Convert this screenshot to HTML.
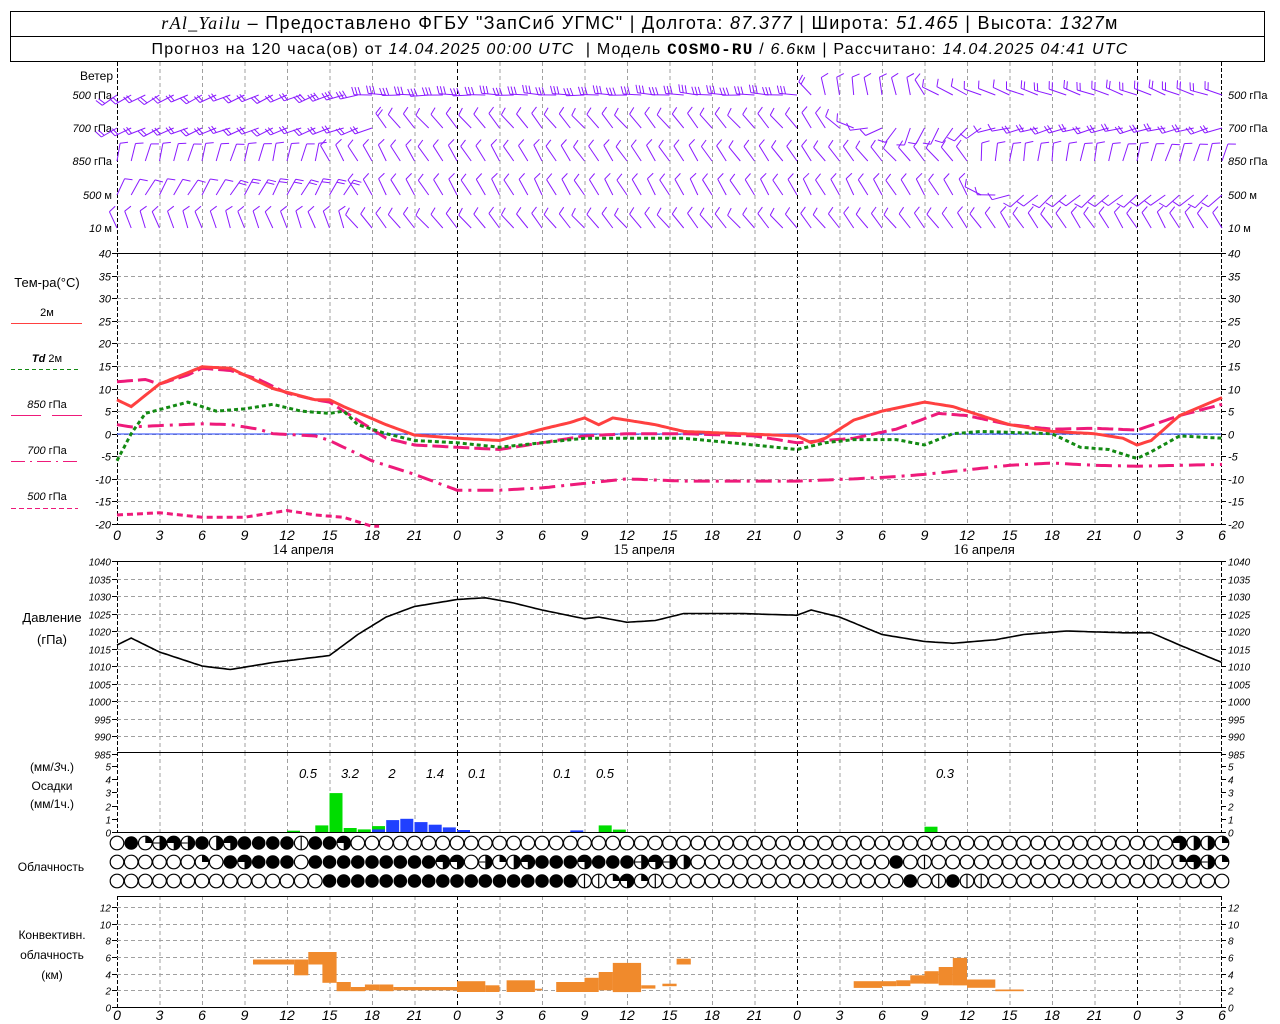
<!DOCTYPE html>
<html><head><meta charset="utf-8">
<style>
html,body{margin:0;padding:0;background:#fff;width:1280px;height:1024px;overflow:hidden}
svg{display:block}
.t{font-family:"Liberation Sans",sans-serif;fill:#000}
.i{font-family:"Liberation Sans",sans-serif;font-style:italic;fill:#000}
</style></head><body>
<svg id="s" width="1280" height="1024" xmlns="http://www.w3.org/2000/svg">
<rect x="10.5" y="11.5" width="1254" height="50" fill="none" stroke="#000"/>
<line x1="10" y1="36.5" x2="1265" y2="36.5" stroke="#000"/>
<text class="t" x="640" y="29" style="font-size:18px;letter-spacing:1.3px" text-anchor="middle" xml:space="preserve"><tspan font-family="Liberation Serif" font-style="italic">rAl_Yailu</tspan> – Предоставлено ФГБУ "ЗапСиб УГМС" | Долгота: <tspan font-style="italic">87.377</tspan> | Широта: <tspan font-style="italic">51.465</tspan> | Высота: <tspan font-style="italic">1327</tspan>м</text>
<text class="t" x="640" y="54" style="font-size:16px;letter-spacing:1.2px" text-anchor="middle" xml:space="preserve">Прогноз на 120 часа(ов) от <tspan font-style="italic">14.04.2025 00:00 UTC</tspan>  | Модель <tspan font-family="Liberation Mono" font-weight="bold">COSMO-RU</tspan> / <tspan font-style="italic">6.6</tspan>км | Рассчитано: <tspan font-style="italic">14.04.2025 04:41 UTC</tspan></text>
<g id="g"></g>
</svg>
<script>
var o=[];
function X(h){return 117+h*340/24}
function L(x1,y1,x2,y2,c,w,d){o.push('<line x1="'+x1+'" y1="'+y1+'" x2="'+x2+'" y2="'+y2+'" stroke="'+c+'" stroke-width="'+(w||1)+'"'+(d?' stroke-dasharray="'+d+'"':'')+'/>')}
function T(x,y,s,a,cl,fs){o.push('<text class="'+(cl||'i')+'" x="'+x+'" y="'+y+'"'+(a?' text-anchor="'+a+'"':'')+' style="font-size:'+(fs||11)+'px">'+s+'</text>')}
function interp(p,h){for(var i=0;i<p.length-1;i++){if(h>=p[i][0]&&h<=p[i+1][0]){var f=(h-p[i][0])/(p[i+1][0]-p[i][0]);return p[i][1]+f*(p[i+1][1]-p[i][1]);}}return p[p.length-1][1]}
function curve(p,Y,c,w,d,h0,h1){var s='';for(var h=(h0||0);h<=(h1||78)+0.001;h+=0.25){s+=X(h).toFixed(1)+','+Y(interp(p,h)).toFixed(1)+' '}o.push('<polyline points="'+s+'" fill="none" stroke="'+c+'" stroke-width="'+w+'"'+(d?' stroke-dasharray="'+d+'"':'')+'/>')}
function vgrid(y1,y2){for(var h=0;h<=78;h+=3){var day=(h%24==0);if(h==0||h==78)continue;L(X(h)+.5,y1,X(h)+.5,y2,day?'#000':'#a0a0a0',1,'4,3')}L(117.5,y1,117.5,y2,'#000',1,'4,2');L(1221.5,y1,1221.5,y2,'#000',1,'4,2')}
vgrid(62,253);vgrid(253,524);vgrid(561,752);vgrid(752,832);vgrid(896,1007);
var TY=function(t){return 433.7-t*4.517};
for(var t=-20;t<=40;t+=5){var y=Math.round(TY(t))+.5;if(t>-20&&t<40)L(117,y,1221,y,'#a0a0a0',1,'4,3');L(112,y,117,y,'#000');L(1221,y,1226,y,'#000');T(111,y+4,t,'end');T(1228,y+4,t)}
L(117,253.5,1221,253.5,'#000');L(117,524.5,1221,524.5,'#000');
L(117,434,1221,434,'#2040ff',1);
var hrs=[0,3,6,9,12,15,18,21];
for(var h=0;h<=78;h+=3){T(X(h),540,hrs[(h%24)/3],'middle',null,14);T(X(h),1020,hrs[(h%24)/3],'middle',null,14)}
T(303,554,'<tspan font-family="Liberation Serif" style="font-size:15px">14</tspan> апреля','middle','t',13);
T(644,554,'<tspan font-family="Liberation Serif" style="font-size:15px">15</tspan> апреля','middle','t',13);
T(984,554,'<tspan font-family="Liberation Serif" style="font-size:15px">16</tspan> апреля','middle','t',13);
var p500=[[0,-18],[3,-17.5],[6,-18.5],[9,-18.5],[12,-17],[14,-18],[16,-18.5],[17,-19.5],[18,-20.5]];
var p700=[[0,2],[1,1.5],[3,1.8],[6,2.2],[8,2],[10,1],[11,0],[14,-0.5],[15,-1.5],[18,-6],[21,-9],[24,-12.5],[27,-12.5],[30,-12],[33,-11],[36,-10],[40,-10.5],[48,-10.5],[52,-10],[55,-9.5],[57,-9],[60,-8],[63,-7],[66,-6.5],[69,-7],[72,-7.2],[75,-7],[78,-6.8]];
var p850=[[0,11.5],[2,12],[3,11],[5,13],[6,14.5],[8,14],[10,12],[12,9],[14,7.5],[15,7],[17,3],[19,-1],[21,-2.5],[24,-3],[27,-3.5],[30,-2],[33,-0.5],[36,0],[40,0],[45,-0.5],[48,-2],[52,-1],[55,1],[58,4.5],[60,4],[63,2],[66,1],[69,1.2],[72,0.8],[75,4],[78,6.5]];
var pTd=[[0,-6],[1,0],[2,4.5],[5,7],[7,5],[9,5.5],[11,6.5],[13,5],[15,4.5],[16,5],[17,2],[19,0],[21,-1.5],[24,-2],[27,-3],[30,-2],[33,-1],[36,-1],[40,-1],[45,-2.5],[48,-3.5],[50,-2],[52,-1.3],[55,-1.3],[57,-2.5],[59,0],[61,0.5],[66,0],[68,-3],[70,-3.5],[72,-5.5],[73,-4],[75,-0.5],[78,-1]];
var pT=[[0,7.5],[1,6],[3,11],[6,14.8],[8,14.5],[11,10],[14,7.5],[15,7.5],[16,6],[19,2],[21,-0.3],[24,-1],[27,-1.5],[30,1],[32,2.5],[33,3.5],[34,2],[35,3.5],[38,2],[40,0.5],[48,-0.5],[49,-2],[50,-1],[52,3],[54,5],[57,7],[59,6],[61,4],[63,2],[66,0.5],[69,0],[71,-1],[72,-2.5],[73,-1.5],[75,4],[78,8]];
curve(p500,TY,'#ee1a7a',3,'6,4',0,18.5);
curve(p700,TY,'#ee1a7a',3,'16,6,3,6');
curve(p850,TY,'#ee1a7a',3,'16,5');
curve(pTd,TY,'#138a13',3,'4,3');
curve(pT,TY,'#ff4040',3);
T(47,287,'Тем-ра(°C)','middle','t',13);
T(47,316,'2м','middle','t',11);L(11,323.5,82,323.5,'#ff4040',1);
T(47,362,'<tspan font-style="italic" font-weight="bold">Td</tspan>  2м','middle','t',11);L(11,369.5,78,369.5,'#138a13',1,'4,3');
T(47,408,'<tspan font-style="italic">850</tspan> гПа','middle','t',11);L(11,415.5,41,415.5,'#ee1a7a',1);L(52,415.5,82,415.5,'#ee1a7a',1);
T(47,454,'<tspan font-style="italic">700</tspan> гПа','middle','t',11);L(11,461.5,78,461.5,'#ee1a7a',1,'14,5,2,5');
T(47,500,'<tspan font-style="italic">500</tspan> гПа','middle','t',11);L(11,508.5,78,508.5,'#ee1a7a',1,'5,3');
var PY=function(p){return 561+(1040-p)*3.5};
for(var p=985;p<=1040;p+=5){var y=Math.round(PY(p))+.5;if(p>985&&p<1040)L(117,y,1221,y,'#a0a0a0',1,'4,3');L(112,y,117,y,'#000');L(1221,y,1226,y,'#000');T(111,y+4,p,'end',null,10);T(1228,y+4,p,null,null,10)}
L(117,561.5,1221,561.5,'#000');L(117,752.5,1221,752.5,'#000');
var pp=[[0,1016],[1,1018],[3,1014],[6,1010],[8,1009],[11,1011],[13,1012],[15,1013],[17,1019],[19,1024],[21,1027],[24,1029],[26,1029.5],[28,1028],[30,1026],[33,1023.5],[34,1024],[36,1022.5],[38,1023],[40,1025],[44,1025],[48,1024.5],[49,1026],[51,1024],[54,1019],[57,1017],[59,1016.5],[62,1017.5],[64,1019],[67,1020],[71,1019.5],[73,1019.5],[75,1016],[78,1011]];
curve(pp,PY,'#000',1.6);
T(52,622,'Давление','middle','t',13);T(52,644,'(гПа)','middle','t',13);
var RY=function(v){return 832-v*13.2};
for(var v=0;v<=5;v++){var y=Math.round(RY(v))+.5;L(112,y,117,y,'#000');L(1221,y,1226,y,'#000');T(111,y+4,v,'end',null,10);T(1228,y+4,v,null,null,10)}
var bars=[[12,.1,'#00dd00'],[14,.5,'#00dd00'],[15,2.95,'#00dd00'],[16,.3,'#00dd00'],[17,.2,'#00dd00'],[18,.45,'#00dd00'],[18,.2,'#2040ff'],[19,.9,'#2040ff'],[20,1,'#2040ff'],[21,.75,'#2040ff'],[22,.55,'#2040ff'],[23,.35,'#2040ff'],[24,.15,'#2040ff'],[32,.12,'#2040ff'],[34,.5,'#00dd00'],[35,.18,'#00dd00'],[57,.4,'#00dd00']];
bars.forEach(function(b){o.push('<rect x="'+X(b[0]).toFixed(1)+'" y="'+RY(b[1]).toFixed(1)+'" width="13" height="'+(b[1]*13.2).toFixed(1)+'" fill="'+b[2]+'"/>')});
L(117,832.5,1221,832.5,'#000');
[[308,'0.5'],[350,'3.2'],[392,'2'],[435,'1.4'],[477,'0.1'],[562,'0.1'],[605,'0.5'],[945,'0.3']].forEach(function(a){T(a[0],778,a[1],'middle',null,13)});
T(52,771,'(мм/<tspan font-style="italic">3</tspan>ч.)','middle','t',12);T(52,790,'Осадки','middle','t',12);T(52,808,'(мм/1ч.)','middle','t',12);
var r1={},r2={},r3={};
function fill(r,a,b,v){for(var i=a;i<=b;i++)r[i]=v}
Object.assign(r1,{1:4,2:1,3:6,4:3,5:6,6:4,7:2,8:3,9:4,10:4,11:4,12:4,13:5,14:4,15:4,16:3,75:3,76:2,77:2,78:1});
fill(r2,14,22,4);Object.assign(r2,{6:1,8:4,9:3,10:4,11:4,12:4,13:0,23:3,24:3,25:0,26:6,27:1,28:2,29:3,30:4,31:4,32:4,33:3,34:4,35:4,36:4,37:6,38:3,39:6,40:2,55:4,57:5,73:5,75:1,76:3,77:6,78:1});
fill(r3,15,32,4);Object.assign(r3,{33:5,34:5,35:1,36:3,37:1,38:5,56:4,58:5,59:4,60:5,61:5});
function circ(cx,cy,v){var r=6.8,s='';
 if(v==4)s+='<circle cx="'+cx+'" cy="'+cy+'" r="'+r+'" fill="#000"/>';
 else{s+='<circle cx="'+cx+'" cy="'+cy+'" r="'+r+'" fill="#fff" stroke="#000" stroke-width="1.2"/>';
 if(v==1)s+='<path d="M'+cx+' '+cy+'V'+(cy-r)+'A'+r+' '+r+' 0 0 1 '+(cx+r)+' '+cy+'Z" fill="#000"/>';
 if(v==2)s+='<path d="M'+cx+' '+(cy-r)+'A'+r+' '+r+' 0 0 1 '+cx+' '+(cy+r)+'Z" fill="#000"/>';
 if(v==3)s+='<path d="M'+cx+' '+cy+'H'+(cx-r)+'A'+r+' '+r+' 0 1 1 '+cx+' '+(cy+r)+'Z" fill="#000"/>';
 if(v==5)s+='<line x1="'+cx+'" y1="'+(cy-r)+'" x2="'+cx+'" y2="'+(cy+r)+'" stroke="#000" stroke-width="1.2"/>';
 if(v==6)s+='<path d="M'+cx+' '+(cy-r)+'A'+r+' '+r+' 0 0 1 '+cx+' '+(cy+r)+'Z" fill="#000"/><line x1="'+(cx-r)+'" y1="'+cy+'" x2="'+cx+'" y2="'+cy+'" stroke="#000"/>';}
 o.push(s)}
for(var h=0;h<=78;h++){var cx=Math.round(X(h)*10)/10;circ(cx,843,r1[h]||0);circ(cx,862,r2[h]||0);circ(cx,881,r3[h]||0)}
T(51,871,'Облачность','middle','t',12);
var CY=function(k){return 1007-k*8.33};
for(var k=0;k<=12;k+=2){var y=Math.round(CY(k))+.5;if(k>0)L(117,y,1221,y,'#a0a0a0',1,'4,3');L(112,y,117,y,'#000');L(1221,y,1226,y,'#000');T(111,y+4,k,'end',null,10);T(1228,y+4,k,null,null,10)}
L(117,896.5,1221,896.5,'#000');L(117,1007.5,1221,1007.5,'#000');
var cb=[[9.6,12.5,5.1,5.7],[12.5,13.5,3.8,5.7],[13.5,14.5,5.1,6.6],[14.5,15.5,2.9,6.6],[15.5,16.5,1.9,3],[16.5,17.5,1.9,2.4],[17.5,18.5,2,2.7],[18.5,19.5,1.9,2.7],[19.5,24,2,2.4],[24,26,1.8,3.1],[26,27,1.8,2.6],[27.5,29.5,1.8,3.2],[29.5,30,2,2.2],[31,33,1.8,3],[33,34,1.8,3.5],[34,35,2,4.2],[35,37,1.8,5.3],[37,38,2.2,2.6],[38.5,39.5,2.5,2.8],[39.5,40.5,5.1,5.8],[52,54,2.3,3.1],[54,55,2.5,3.1],[55,56,2.5,3.2],[56,57,2.8,3.8],[57,58,2.8,4.3],[58,59,2.6,4.8],[59,60,2.6,5.9],[60,62,2.3,3.3],[62,64,1.9,2.1]];
cb.forEach(function(b){o.push('<rect x="'+X(b[0]).toFixed(1)+'" y="'+CY(b[3]).toFixed(1)+'" width="'+(X(b[1])-X(b[0])).toFixed(1)+'" height="'+((b[3]-b[2])*8.33).toFixed(1)+'" fill="#f08a2c"/>')});
T(52,939,'Конвективн.','middle','t',12);T(52,959,'облачность','middle','t',12);T(52,979,'(км)','middle','t',12);
T(113,80,'Ветер','end','t',12);
var lv=[[95,'<tspan font-style="italic">500</tspan> гПа'],[128,'<tspan font-style="italic">700</tspan> гПа'],[161,'<tspan font-style="italic">850</tspan> гПа'],[195,'<tspan font-style="italic">500</tspan> м'],[228,'<tspan font-style="italic">10</tspan>   м']];
lv.forEach(function(a){T(112,a[0]+4,a[1],'end','t',11);T(1228,a[0]+4,a[1],null,'t',11)});
var WD=[
 [[0,240],[16,250],[18,270],[48,275],[50,350],[56,350],[58,300],[62,290],[78,290]],
 [[0,245],[18,250],[19,320],[48,320],[50,330],[56,200],[60,220],[62,255],[78,255]],
 [[0,15],[14,15],[15,330],[48,325],[52,320],[60,320],[61,5],[78,20]],
 [[0,30],[16,30],[17,330],[48,330],[60,330],[62,270],[64,230],[78,230]],
 [[0,340],[16,340],[17,320],[48,320],[78,330]]];
var WS=[
 [[0,25],[16,40],[20,45],[48,45],[50,20],[60,15],[70,30],[78,35]],
 [[0,30],[18,35],[20,20],[48,20],[52,10],[60,10],[64,25],[78,25]],
 [[0,15],[14,20],[16,20],[48,15],[60,10],[78,15]],
 [[0,20],[16,25],[18,15],[48,15],[60,10],[78,15]],
 [[0,10],[78,10]]];
var lys=[95,128,161,195,228];
for(var l=0;l<5;l++){for(var h=0;h<=78;h++){var d=interp(WD[l],h)+((h*37)%11-5),sp=interp(WS[l],h);
 var a=d*Math.PI/180,x0=X(h),y0=lys[l],Ls=18,ex=x0+Math.sin(a)*Ls,ey=y0-Math.cos(a)*Ls;
 L(x0.toFixed(1),y0,ex.toFixed(1),ey.toFixed(1),'#8a1aff',1);
 var n=Math.round(sp/15),b=a+Math.PI*0.4;
 for(var i=0;i<n&&i<4;i++){var f=1-i*0.18,bx=x0+Math.sin(a)*Ls*f,by=y0-Math.cos(a)*Ls*f;
  L(bx.toFixed(1),by.toFixed(1),(bx+Math.sin(b)*8).toFixed(1),(by-Math.cos(b)*8).toFixed(1),'#8a1aff',1)}}}
document.getElementById('g').innerHTML=o.join('');
</script>
</body></html>
